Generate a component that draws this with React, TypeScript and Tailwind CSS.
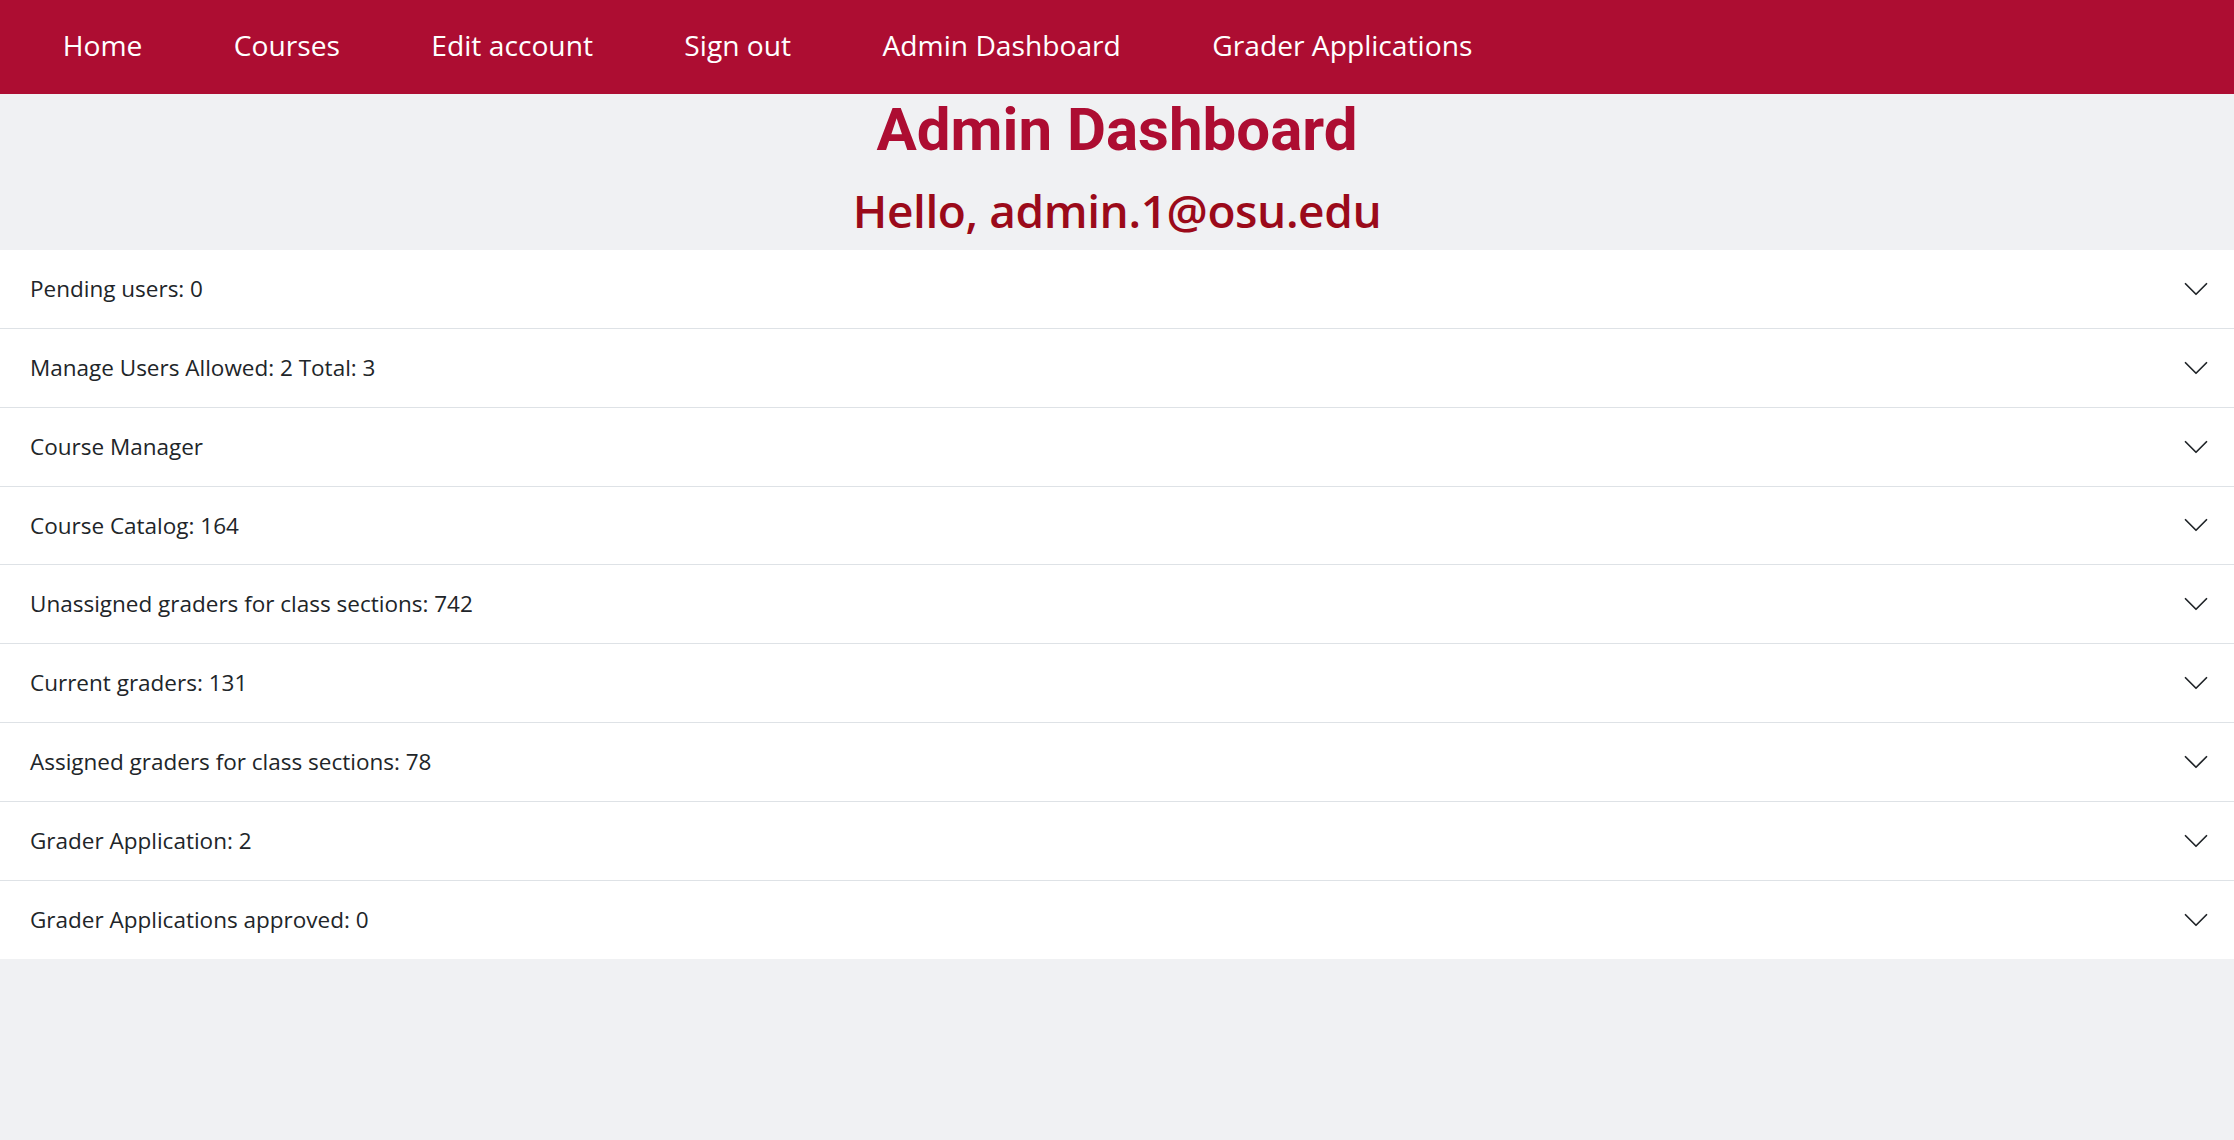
import { FunctionComponent } from "react";

const navLinks = ["Home", "Courses", "Edit account", "Sign out", "Admin Dashboard", "Grader Applications"];

const sections = [
    "Pending users: 0",
    "Manage Users Allowed: 2 Total: 3",
    "Course Manager",
    "Course Catalog: 164",
    "Unassigned graders for class sections: 742",
    "Current graders: 131",
    "Assigned graders for class sections: 78",
    "Grader Application: 2",
    "Grader Applications approved: 0",
];

const Chevron: FunctionComponent = () => (
    <svg viewBox="0 0 16 16" className="w-[28px] h-[28px] shrink-0" fill="none">
        <path d="M2 5L8 11L14 5" stroke="#212529" strokeLinecap="round" strokeLinejoin="round" strokeWidth="1" />
    </svg>
);

const App: FunctionComponent = () => {
    return (
        <div className="min-h-screen w-full bg-[#f0f1f3] font-['Open_Sans',sans-serif]">
            <nav className="h-[94px] bg-[#ad0d32] flex items-center pl-[17px] pb-[3px]">
                {navLinks.map((link) => (
                    <a key={link} className="px-[45.7px] text-[28.2px] text-white cursor-pointer">
                        {link}
                    </a>
                ))}
            </nav>

            <div className="flex flex-col items-center">
                <h1 className="text-[60px] leading-[1.2] font-bold text-[#ad0d32] font-['Roboto',sans-serif]">
                    Admin Dashboard
                </h1>
                <h2 className="mt-[17px] mb-[12px] text-[46px] leading-[1.2] font-semibold text-[#9b0a1a] tracking-[-0.4px]">
                    Hello, admin.1@osu.edu
                </h2>
            </div>

            <div className="bg-white">
                {sections.map((section, i) => (
                    <div
                        key={section}
                        className={`flex items-center justify-between h-[78.8px] pl-[30px] pr-[24px] ${
                            i < sections.length - 1 ? "border-b border-[#dee2e6]" : ""
                        }`}>
                        <span className="text-[22.5px] text-[#212529]">{section}</span>
                        <Chevron />
                    </div>
                ))}
            </div>
        </div>
    );
};

export default App;
